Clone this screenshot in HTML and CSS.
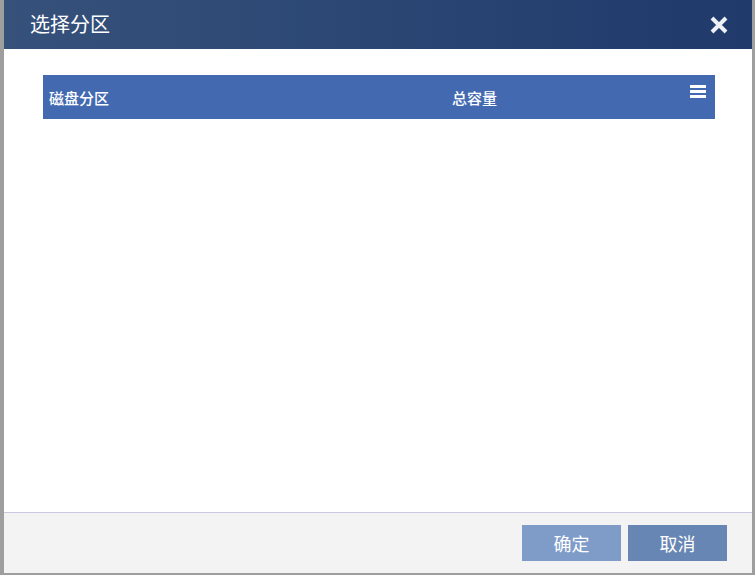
FILE: index.html
```html
<!DOCTYPE html>
<html lang="zh-CN">
<head>
    <meta charset="UTF-8">
    <meta name="viewport" content="width=device-width, initial-scale=1.0">
    <title>选择分区</title>
    <link rel="stylesheet" href="styles.css">
</head>
<body>
    <div class="dialog">
        <div class="dialog-header">
            <span class="dialog-title">选择分区</span>
            <svg class="close" width="20" height="20" viewBox="0 0 20 20">
                <path d="M3 3 L17 17 M17 3 L3 17" stroke="#eef0f4" stroke-width="4" stroke-linecap="butt"/>
            </svg>
        </div>
        <div class="dialog-body">
            <table class="grid">
                <thead>
                    <tr>
                        <th class="col-name">磁盘分区</th>
                        <th class="col-size">总容量</th>
                        <th class="col-menu">
                            <svg width="16" height="14" viewBox="0 0 16 14">
                                <rect x="0" y="0" width="16" height="3" fill="#fff"/>
                                <rect x="0" y="5" width="16" height="3" fill="#fff"/>
                                <rect x="0" y="10" width="16" height="3" fill="#fff"/>
                            </svg>
                        </th>
                    </tr>
                </thead>
                <tbody></tbody>
            </table>
        </div>
        <div class="dialog-footer">
            <button class="btn btn-ok">确定</button>
            <button class="btn btn-cancel">取消</button>
        </div>
    </div>
</body>
</html>
```

FILE: styles.css
```css
html, body {
    margin: 0;
    padding: 0;
    height: 100%;
}
body {
    background: #9e9e9e;
    font-family: "Liberation Sans", "Noto Sans CJK SC", sans-serif;
    padding-left: 4px;
    padding-right: 3px;
    box-sizing: border-box;
}
.dialog {
    height: 573px;
    display: flex;
    flex-direction: column;
    background: #fff;
}
.dialog-header {
    height: 49px;
    flex: none;
    display: flex;
    align-items: center;
    justify-content: space-between;
    padding: 0 23px 0 26px;
    background: linear-gradient(to right, #36527b, #1f3a6b);
}
.dialog-title {
    color: #fff;
    font-size: 20px;
    margin-top: -2px;
}
.close {
    display: block;
    margin-top: 1px;
}
.dialog-body {
    flex: 1;
    padding: 26px 37px 0 39px;
}
.grid {
    width: 100%;
    border-collapse: collapse;
}
.grid th {
    background: #436ab1;
    color: #fff;
    height: 44px;
    font-size: 15px;
    font-weight: 500;
    text-align: left;
    padding: 0;
}
.col-name {
    padding-left: 6px !important;
    width: 403px;
}
.col-menu {
    width: 25px;
    vertical-align: top;
}
.col-menu svg {
    display: block;
    margin-top: 10px;
}
.dialog-footer {
    height: 61px;
    flex: none;
    border-top: 1px solid #c9c8df;
    background: #f3f3f3;
    display: flex;
    justify-content: flex-end;
    align-items: flex-start;
    gap: 7px;
    padding: 12px 25px 0 0;
    box-sizing: border-box;
}
.btn {
    width: 99px;
    height: 36px;
    border: none;
    color: #fff;
    font-size: 18px;
    font-family: "Liberation Sans", "Noto Sans CJK SC", sans-serif;
    padding: 0;
}
.btn-ok {
    background: #7f9cc9;
}
.btn-cancel {
    background: #6886b3;
}
```
